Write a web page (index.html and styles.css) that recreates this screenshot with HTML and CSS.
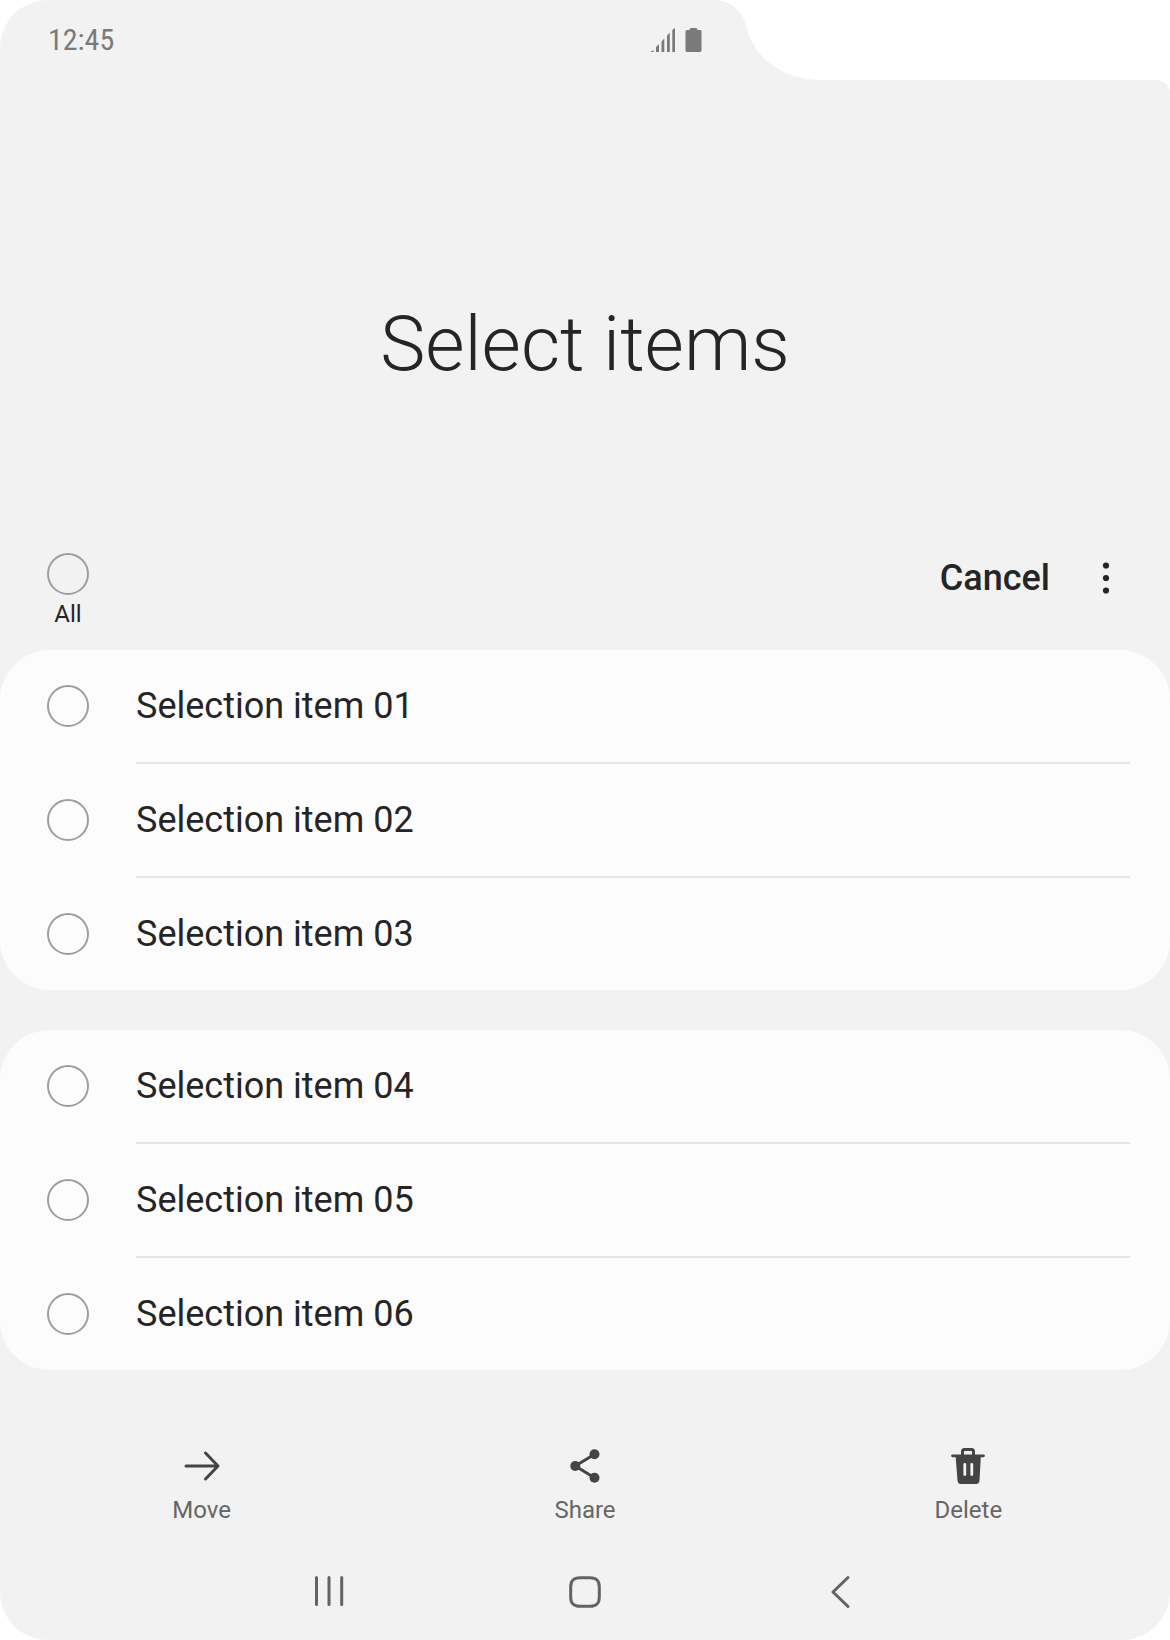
FILE: index.html
```html
<!DOCTYPE html>
<html lang="en">
<head>
<meta charset="utf-8">
<meta name="viewport" content="width=device-width, initial-scale=1">
<title>Select items</title>
<link rel="stylesheet" href="styles.css">
</head>
<body>
<div class="screen">
  <header class="status">
    <div class="status-tab">
      <time class="clock">12:45</time>
      <div class="status-icons">
        <svg width="24" height="24" viewBox="0 0 24 24" fill="#7a7a7a" aria-hidden="true">
          <path d="M0 24V23.5L2.6 22V24ZM5 24V19L8 16V24ZM10.5 24V13.5L13.3 10.5V24ZM16 24V7.500L18.800 4.800V24ZM21.300 24V2L24 0V24Z"/>
        </svg>
        <svg width="17" height="24" viewBox="0 0 17 24" fill="#7a7a7a" aria-hidden="true">
          <path d="M6 0H11Q12.500 0 12.500 2H15.500Q16.500 2 16.500 3.500V22.500Q16.500 24 15 24H2Q.500 24 .500 22.500V3.500Q.500 2 2 2H4.500Q4.500 0 6 0Z"/>
        </svg>
      </div>
    </div>
    <svg class="status-curve" width="110" height="80" viewBox="0 0 110 80" fill="#f2f2f2" aria-hidden="true">
      <path d="M0 0H4C20 3 29 13 32 25C38 55 66 80 108 80H0Z"/>
    </svg>
  </header>

  <main class="content">
    <h1 class="title">Select items</h1>

    <div class="toolbar">
      <label class="select-all">
        <input class="check" type="checkbox">
        <span>All</span>
      </label>
      <div class="toolbar-actions">
        <button class="cancel" type="button">Cancel</button>
        <button class="more" type="button" aria-label="More options">
          <svg width="24" height="48" viewBox="0 0 24 48" fill="#252525" aria-hidden="true">
            <circle cx="12" cy="11.500" r="3.100"/><circle cx="12" cy="24" r="3.100"/><circle cx="12" cy="36.500" r="3.100"/>
          </svg>
        </button>
      </div>
    </div>

    <ul class="card">
      <li><label class="row"><input class="check" type="checkbox"><span class="row-text">Selection item 01</span></label></li>
      <li><label class="row"><input class="check" type="checkbox"><span class="row-text">Selection item 02</span></label></li>
      <li><label class="row"><input class="check" type="checkbox"><span class="row-text">Selection item 03</span></label></li>
    </ul>
    <ul class="card">
      <li><label class="row"><input class="check" type="checkbox"><span class="row-text">Selection item 04</span></label></li>
      <li><label class="row"><input class="check" type="checkbox"><span class="row-text">Selection item 05</span></label></li>
      <li><label class="row"><input class="check" type="checkbox"><span class="row-text">Selection item 06</span></label></li>
    </ul>

    <div class="actions">
      <button class="action" type="button">
        <svg width="48" height="48" viewBox="0 0 48 48" fill="none" stroke="#444" stroke-width="3" stroke-linecap="round" stroke-linejoin="round" aria-hidden="true">
          <path d="M8 24H40M27.500 11L40 24L27.500 37"/>
        </svg>
        <span>Move</span>
      </button>
      <button class="action" type="button">
        <svg width="48" height="48" viewBox="0 0 48 48" fill="#444" aria-hidden="true">
          <path d="M33.500 12.300L14.300 24L33.500 35.700" fill="none" stroke="#444" stroke-width="3"/>
          <circle cx="14.300" cy="24" r="5"/><circle cx="33.500" cy="12.300" r="5"/><circle cx="33.500" cy="35.700" r="5"/>
        </svg>
        <span>Share</span>
      </button>
      <button class="action" type="button">
        <svg width="48" height="48" viewBox="0 0 48 48" fill="#444" aria-hidden="true">
          <path d="M18.500 14V9.500Q18.500 7.500 20.500 7.500H27.500Q29.500 7.500 29.500 9.500V14" fill="none" stroke="#444" stroke-width="3"/>
          <path d="M8.500 12.400H39.500A1.300 1.300 0 0 1 39.500 15.200H36.800L35.500 38.500Q35.200 42 32 42H17Q13.800 42 13.500 38.500L11.700 15.200H8.500A1.300 1.300 0 0 1 8.500 12.400Z"/>
          <path d="M20.800 22.500V32.500M27.800 22.500V32.500" stroke="#f2f2f2" stroke-width="2.800" stroke-linecap="round"/>
        </svg>
        <span>Delete</span>
      </button>
    </div>
  </main>

  <nav class="nav" aria-label="System">
    <button type="button" aria-label="Recents">
      <svg width="48" height="48" viewBox="0 0 48 48" fill="none" stroke="#636363" stroke-width="3" stroke-linecap="round" aria-hidden="true">
        <path d="M11.500 9.500V36.500M24 9.500V36.500M36.700 9.500V36.500"/>
      </svg>
    </button>
    <button type="button" aria-label="Home">
      <svg width="48" height="48" viewBox="0 0 48 48" fill="none" stroke="#636363" stroke-width="3" aria-hidden="true">
        <path d="M19 9.700H29C35.500 9.700 38.300 12.500 38.300 19V29C38.300 35.500 35.500 38.300 29 38.300H19C12.500 38.300 9.700 35.500 9.700 29V19C9.700 12.500 12.500 9.700 19 9.700Z"/>
      </svg>
    </button>
    <button type="button" aria-label="Back">
      <svg width="48" height="48" viewBox="0 0 48 48" fill="none" stroke="#636363" stroke-width="3" stroke-linecap="round" stroke-linejoin="round" aria-hidden="true">
        <path d="M31 9.500L16 24L31 38.500"/>
      </svg>
    </button>
  </nav>
</div>
</body>
</html>
```

FILE: styles.css
```css
* {
  box-sizing: border-box;
}

body {
  margin: 0;
  background: #fff;
  color: #252525;
  font-family: Roboto, "Liberation Sans", sans-serif;
}

button {
  display: flex;
  align-items: center;
  justify-content: center;
  padding: 0;
  border: 0;
  background: none;
  color: inherit;
  font: inherit;
}

svg {
  display: block;
}

.screen {
  display: flex;
  flex-direction: column;
  min-height: 100vh;
}

.status {
  display: flex;
  height: 80px;
}

.status-tab {
  display: flex;
  align-items: center;
  justify-content: space-between;
  width: 61%;
  padding: 0 12px 0 48px;
  border-top-left-radius: 48px;
  background: #f2f2f2;
}

.status-curve {
  flex: none;
}

.clock {
  color: #7a7a7a;
  font-family: "Roboto Condensed", Roboto, sans-serif;
  font-size: 30px;
  line-height: 36px;
}

.status-icons {
  display: flex;
  gap: 10px;
}

.content {
  flex: 1;
  border-top-right-radius: 14px;
  background: #f2f2f2;
}

.title {
  margin: 0;
  padding: 220px 48px 142px;
  font-size: 76px;
  font-weight: 300;
  line-height: 88px;
  text-align: center;
}

.toolbar {
  display: flex;
  align-items: flex-start;
  justify-content: space-between;
  height: 120px;
  padding: 20px 52px 0 47px;
}

.select-all {
  display: flex;
  flex-direction: column;
  align-items: center;
  gap: 5px;
  padding-top: 3px;
  font-size: 24px;
  line-height: 28px;
}

.check {
  flex: none;
  width: 42px;
  height: 42px;
  margin: 0;
  border: 2px solid #9e9e9e;
  border-radius: 50%;
  appearance: none;
}

.check:checked {
  border-color: #252525;
  background: #252525;
}

.toolbar-actions {
  display: flex;
  align-items: center;
  gap: 44px;
  height: 56px;
}

.cancel {
  font-size: 36px;
  font-weight: 500;
  line-height: 42px;
}

.card {
  margin: 0 0 40px;
  padding: 0;
  border-radius: 50px;
  background: #fcfcfc;
  list-style: none;
}

.row {
  display: flex;
  align-items: center;
  gap: 47px;
  height: 112px;
  padding: 0 40px 0 47px;
}

.row-text {
  font-size: 36px;
  line-height: 42px;
}

.card li + li::before {
  content: "";
  display: block;
  height: 2px;
  margin: 0 40px 0 136px;
  background: #e5e5e5;
}

.actions {
  display: grid;
  grid-template-columns: repeat(3, 1fr);
  padding: 32px 10px 44px;
}

.action {
  flex-direction: column;
  gap: 6px;
  color: #666;
  font-size: 24px;
  line-height: 28px;
}

.nav {
  display: flex;
  justify-content: center;
  gap: 208px;
  padding-bottom: 24px;
  border-radius: 0 0 48px 48px;
  background: #f2f2f2;
}
```
